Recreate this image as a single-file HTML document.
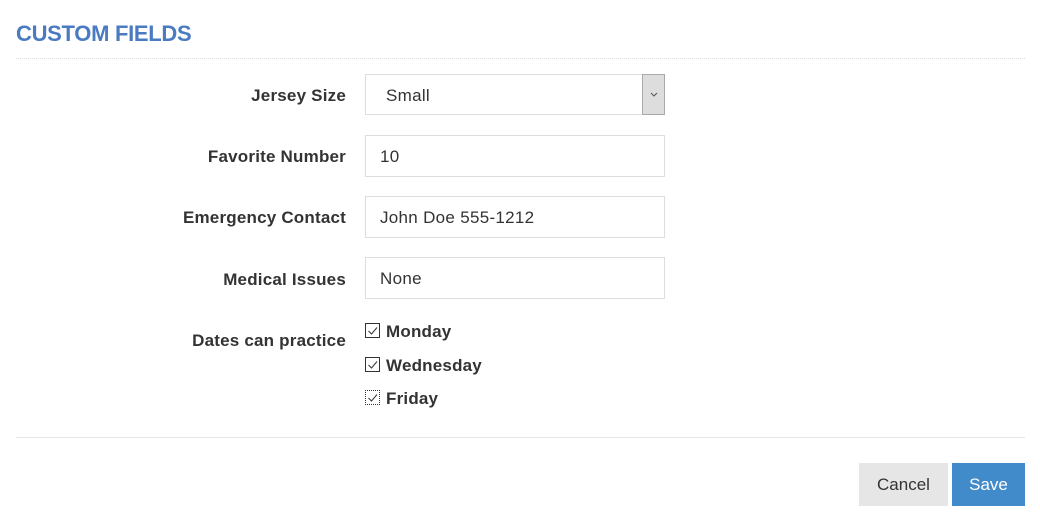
<!DOCTYPE html>
<html><head><style>
body{margin:0;background:#fff;font-family:"Liberation Sans",sans-serif;color:#333;width:1040px;height:518px;position:relative;overflow:hidden}
.a{position:absolute}
h1{position:absolute;left:16px;top:21px;margin:0;font-size:22px;font-weight:bold;color:#4a7bc2;letter-spacing:-0.3px}
.dot{left:16px;top:58px;width:1009px;border-top:1px dotted #ddd}
.lbl{right:694px;font-size:17px;letter-spacing:0.2px;font-weight:bold;color:#333;text-align:right;white-space:nowrap}
.in{left:365px;width:300px;height:42px;border:1px solid #ddd;box-sizing:border-box;font-size:17px;letter-spacing:0.3px;line-height:42px;padding-left:14px;color:#333}
.cb{left:365px;width:15px;height:15px;border:1px solid #333;box-sizing:border-box}
.cb svg{position:absolute;left:1px;top:1px}
.ct{left:386px;font-size:17px;letter-spacing:0.2px;font-weight:bold;color:#333}
.btn{top:463px;height:43px;line-height:43px;text-align:center;font-size:17px}
</style></head><body>
<h1>CUSTOM FIELDS</h1>
<div class="a dot"></div>
<div class="a lbl" style="top:86px">Jersey Size</div>
<div class="a in" style="top:74px;height:41px;padding-left:20px">Small</div>
<div class="a" style="left:642px;top:74px;width:23px;height:41px;background:#ddd;border:1px solid #aaa;box-sizing:border-box"><svg width="21" height="39"><path d="M8 18l3 3 3-3" stroke="#555" fill="none"/></svg></div>
<div class="a lbl" style="top:147px">Favorite Number</div>
<div class="a in" style="top:135px">10</div>
<div class="a lbl" style="top:208px">Emergency Contact</div>
<div class="a in" style="top:196px">John Doe 555-1212</div>
<div class="a lbl" style="top:270px">Medical Issues</div>
<div class="a in" style="top:257px">None</div>
<div class="a lbl" style="top:331px">Dates can practice</div>
<div class="a cb" style="top:323px"><svg width="12" height="12"><path d="M1.5 6l3 3 5.5-6.5" stroke="#333" fill="none"/></svg></div>
<div class="a ct" style="top:322px">Monday</div>
<div class="a cb" style="top:357px"><svg width="12" height="12"><path d="M1.5 6l3 3 5.5-6.5" stroke="#333" fill="none"/></svg></div>
<div class="a ct" style="top:356px">Wednesday</div>
<div class="a cb" style="top:390px;border-style:dotted"><svg width="12" height="12"><path d="M1.5 6l3 3 5.5-6.5" stroke="#333" fill="none"/></svg></div>
<div class="a ct" style="top:389px">Friday</div>
<div class="a" style="left:16px;top:437px;width:1009px;border-top:1px solid #e5e5e5"></div>
<div class="a btn" style="left:859px;width:89px;background:#e6e6e6;color:#333">Cancel</div>
<div class="a btn" style="left:952px;width:73px;background:#428bca;color:#fff">Save</div>
</body></html>
